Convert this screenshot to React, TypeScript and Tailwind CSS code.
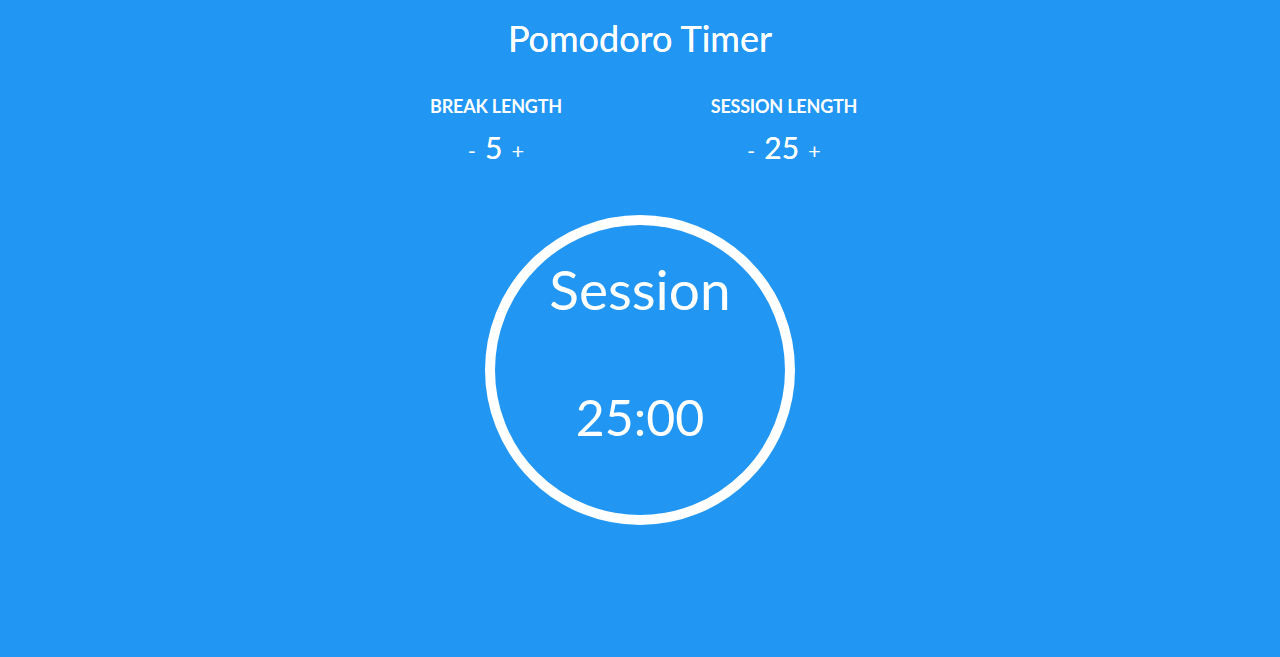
export default function App() {
  return (
    <div className="min-h-[657px] w-full bg-[#2196f3] text-white flex flex-col items-center" style={{ fontFamily: "Lato, 'Open Sans', sans-serif" }}>
      <h1 className="mt-[14px] text-[36px] leading-[48px] font-normal [text-shadow:0_0_0.4px_white]">Pomodoro Timer</h1>
      <div className="mt-[32px] flex">
        <div className="w-[288px] flex flex-col items-center">
          <div className="text-[18px] font-bold leading-[24px] tracking-[-0.2px]">BREAK LENGTH</div>
          <div className="mt-[11px] flex items-baseline gap-[9px]">
            <span className="text-[22px]">-</span>
            <span className="text-[30px] leading-[36px] [text-shadow:0_0_0.5px_white]">5</span>
            <span className="text-[22px]">+</span>
          </div>
        </div>
        <div className="w-[288px] flex flex-col items-center">
          <div className="text-[18px] font-bold leading-[24px] tracking-[-0.2px]">SESSION LENGTH</div>
          <div className="mt-[11px] flex items-baseline gap-[9px]">
            <span className="text-[22px]">-</span>
            <span className="text-[30px] leading-[36px] [text-shadow:0_0_0.5px_white]">25</span>
            <span className="text-[22px]">+</span>
          </div>
        </div>
      </div>
      <div className="mt-[48px] w-[310px] h-[310px] rounded-full border-[10px] border-white flex flex-col items-center">
        <div className="mt-[29px] text-[55px] leading-[70px]">Session</div>
        <div className="mt-[63px] text-[50px] leading-[60px]">25:00</div>
      </div>
    </div>
  );
}
